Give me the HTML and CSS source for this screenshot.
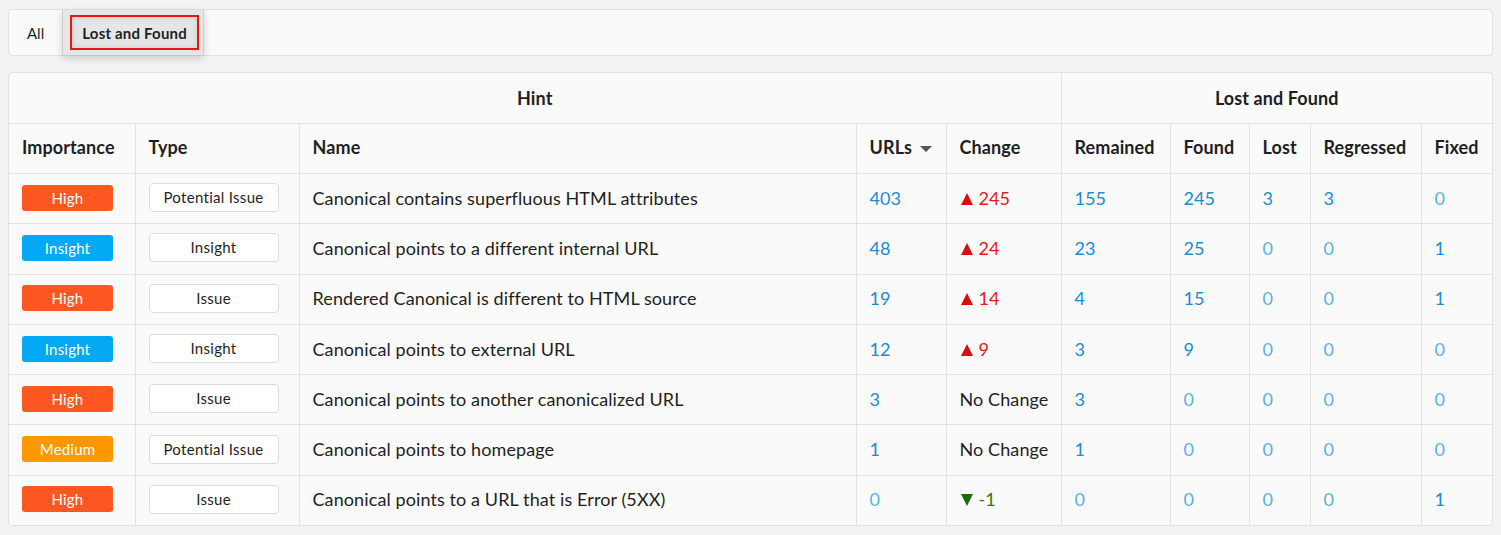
FILE: index.html
```html
<!DOCTYPE html>
<html lang="en">
<head>
<meta charset="UTF-8">
<title>Hints - Lost and Found</title>
<link rel="stylesheet" href="styles.css">
</head>
<body>
<div class="tabs">
    <div class="tab">All</div>
    <div class="tab active"><span class="tab-label">Lost and Found</span></div>
</div>
<div class="panel">
<table class="hints">
    <colgroup>
        <col style="width:126px"><col style="width:164px"><col style="width:557px">
        <col style="width:90px"><col style="width:115px"><col style="width:109px">
        <col style="width:79px"><col style="width:61px"><col style="width:111px"><col>
    </colgroup>
    <thead>
        <tr class="group">
            <th colspan="5">Hint</th>
            <th colspan="5">Lost and Found</th>
        </tr>
        <tr class="cols">
            <th>Importance</th>
            <th>Type</th>
            <th>Name</th>
            <th>URLs <span class="sort"></span></th>
            <th>Change</th>
            <th>Remained</th>
            <th>Found</th>
            <th>Lost</th>
            <th>Regressed</th>
            <th>Fixed</th>
        </tr>
    </thead>
    <tbody>
        <tr>
            <td><span class="level high">High</span></td>
            <td><span class="kind">Potential Issue</span></td>
            <td>Canonical contains superfluous HTML attributes</td>
            <td class="num">403</td>
            <td class="up"><span class="arrow"></span>245</td>
            <td class="num">155</td><td class="num">245</td><td class="num">3</td><td class="num">3</td><td class="num zero">0</td>
        </tr>
        <tr>
            <td><span class="level insight">Insight</span></td>
            <td><span class="kind">Insight</span></td>
            <td>Canonical points to a different internal URL</td>
            <td class="num">48</td>
            <td class="up"><span class="arrow"></span>24</td>
            <td class="num">23</td><td class="num">25</td><td class="num zero">0</td><td class="num zero">0</td><td class="num">1</td>
        </tr>
        <tr>
            <td><span class="level high">High</span></td>
            <td><span class="kind">Issue</span></td>
            <td>Rendered Canonical is different to HTML source</td>
            <td class="num">19</td>
            <td class="up"><span class="arrow"></span>14</td>
            <td class="num">4</td><td class="num">15</td><td class="num zero">0</td><td class="num zero">0</td><td class="num">1</td>
        </tr>
        <tr>
            <td><span class="level insight">Insight</span></td>
            <td><span class="kind">Insight</span></td>
            <td>Canonical points to external URL</td>
            <td class="num">12</td>
            <td class="up"><span class="arrow"></span>9</td>
            <td class="num">3</td><td class="num">9</td><td class="num zero">0</td><td class="num zero">0</td><td class="num zero">0</td>
        </tr>
        <tr>
            <td><span class="level high">High</span></td>
            <td><span class="kind">Issue</span></td>
            <td>Canonical points to another canonicalized URL</td>
            <td class="num">3</td>
            <td>No Change</td>
            <td class="num">3</td><td class="num zero">0</td><td class="num zero">0</td><td class="num zero">0</td><td class="num zero">0</td>
        </tr>
        <tr>
            <td><span class="level medium">Medium</span></td>
            <td><span class="kind">Potential Issue</span></td>
            <td>Canonical points to homepage</td>
            <td class="num">1</td>
            <td>No Change</td>
            <td class="num">1</td><td class="num zero">0</td><td class="num zero">0</td><td class="num zero">0</td><td class="num zero">0</td>
        </tr>
        <tr>
            <td><span class="level high">High</span></td>
            <td><span class="kind">Issue</span></td>
            <td>Canonical points to a URL that is Error (5XX)</td>
            <td class="num zero">0</td>
            <td class="down"><span class="arrow"></span>-1</td>
            <td class="num zero">0</td><td class="num zero">0</td><td class="num zero">0</td><td class="num zero">0</td><td class="num">1</td>
        </tr>
    </tbody>
</table>
</div>
</body>
</html>
```

FILE: styles.css
```css
body {
    margin: 0;
    padding: 9px 8px 0 8px;
    background: #f3f3f3;
    font-family: Lato, "Open Sans", sans-serif;
    color: #1f1f24;
}
.tabs {
    display: flex;
    height: 45px;
    background: #fafafa;
    border: 1px solid #e1e1e1;
    border-radius: 4px;
}
.tab {
    display: flex;
    align-items: center;
    padding: 0 18px 0 18px;
    font-size: 15px;
}
.tab.active {
    padding: 0 4px 0 7px;
    background: #e6e6e6;
    border-left: 1px solid #cfcfcf;
    border-right: 1px solid #cfcfcf;
    box-shadow: 0 3px 8px rgba(0, 0, 0, 0.18);
    font-weight: bold;
    letter-spacing: 0.2px;
}
.tab-label {
    display: flex;
    align-items: center;
    height: 31px;
    padding: 0 10px;
    border: 2px solid #e8160f;
    box-shadow: inset 0 0 6px rgba(0, 0, 0, 0.12);
}
.panel {
    margin-top: 16px;
    background: #fafafa;
    border: 1px solid #e1e1e1;
    border-radius: 4px;
    overflow: hidden;
}
.hints {
    width: 100%;
    border-collapse: collapse;
    table-layout: fixed;
    font-size: 18px;
    letter-spacing: 0.1px;
}
.hints th, .hints td {
    border-left: 1px solid #e3e3e3;
    border-top: 1px solid #e3e3e3;
    padding: 0 0 2px 13px;
    text-align: left;
    white-space: nowrap;
}
.hints tr > :first-child {
    border-left: none;
}
.hints thead tr.group th {
    border-top: none;
    height: 50px;
    text-align: center;
    padding: 0;
}
.hints thead tr.cols th {
    height: 46px;
    padding-bottom: 3px;
}
.hints th {
    font-weight: bold;
}
.hints td {
    height: 47.3px;
}
.sort {
    display: inline-block;
    margin-left: 3px;
    vertical-align: middle;
    border-left: 6px solid transparent;
    border-right: 6px solid transparent;
    border-top: 6px solid #555;
}
.level {
    display: inline-block;
    width: 91px;
    height: 26px;
    line-height: 26px;
    border-radius: 3px;
    text-align: center;
    color: #fff;
    font-size: 15px;
    letter-spacing: 0.2px;
}
.level.high { background: #ff5722; }
.level.insight { background: #03a9f4; }
.level.medium { background: #ff9800; }
.kind {
    display: inline-block;
    box-sizing: border-box;
    width: 130px;
    height: 29px;
    line-height: 27px;
    border: 1px solid #dcdcdc;
    border-radius: 4px;
    background: #fff;
    text-align: center;
    font-size: 15px;
    letter-spacing: 0.3px;
}
.num { color: #1b8cd1; }
.num.zero { color: #5eb0e3; }
.up { color: #e31b1b; }
.down { color: #2d7a0c; }
.arrow {
    display: inline-block;
    margin: 0 6px 0 1px;
    border-left: 6px solid transparent;
    border-right: 6px solid transparent;
}
.up .arrow {
    border-bottom: 12px solid #d90e0e;
    vertical-align: 0;
}
.down .arrow {
    border-top: 12px solid #1d6a00;
    vertical-align: 0;
}
```
